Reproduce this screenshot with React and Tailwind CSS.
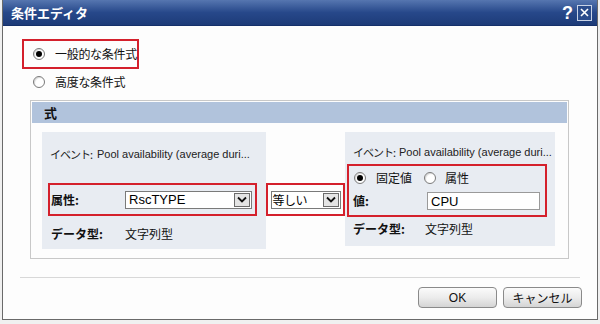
import React from "react";

const jp = { fontFamily: '"Noto Sans CJK JP", "Liberation Sans", sans-serif' };
const lat = { fontFamily: '"Liberation Sans", Arial, "Noto Sans CJK JP", sans-serif' };

function Radio({ checked }) {
  return (
    <div className="w-[12px] h-[12px] rounded-full border border-[#7a7a7a] bg-white flex items-center justify-center shrink-0 shadow-[inset_1px_1px_1px_rgba(0,0,0,0.15)]">
      {checked && <div className="w-[6px] h-[6px] rounded-full bg-black" />}
    </div>
  );
}

function Arrow() {
  return (
    <div className="w-[16px] h-[14px] border border-[#6b6b6b] bg-[#e4e4e4] flex items-center justify-center shrink-0">
      <svg width="10" height="7" viewBox="0 0 10 7">
        <path d="M1 1.5 L5 5.5 L9 1.5" stroke="#111" strokeWidth="1.8" fill="none" />
      </svg>
    </div>
  );
}

export default function App() {
  return (
    <div className="w-[600px] h-[324px] bg-[#f0f0f0] overflow-hidden relative whitespace-nowrap" style={jp}>
      <div className="ml-[2px] w-[596px] h-[320px] bg-[#fdfdfd] border-l border-r border-b border-[#6a6a6a] flex flex-col">
        {/* Title bar */}
        <div className="h-[26px] flex items-center justify-between bg-gradient-to-b from-[#5676b0] via-[#27488a] to-[#1d3b78] border-b border-[#15306a]">
          <span className="ml-[8px] text-white text-[13px] font-bold leading-none">条件エディタ</span>
          <div className="flex items-center gap-[4px] mr-[5px]">
            <span className="text-white text-[18px] font-bold leading-none" style={lat}>?</span>
            <div className="w-[15px] h-[16px] border border-[#c9d3e6] bg-[#2b4c8c] flex items-center justify-center">
              <svg width="9" height="9" viewBox="0 0 9 9">
                <path d="M1 1 L8 8 M8 1 L1 8" stroke="#fff" strokeWidth="1.6" />
              </svg>
            </div>
          </div>
        </div>

        {/* Radio 1 (highlighted) */}
        <div className="mt-[13px] ml-[19px] w-[117px] h-[30px] border-2 border-[#d4202c] flex items-center">
          <div className="ml-[9px]"><Radio checked /></div>
          <span className="ml-[10px] text-[12px] text-[#111] leading-none tracking-[-0.3px]">一般的な条件式</span>
        </div>

        {/* Radio 2 */}
        <div className="mt-[7px] ml-[30px] h-[12px] flex items-center">
          <Radio />
          <span className="ml-[10px] text-[12px] text-[#111] leading-none tracking-[-0.3px]">高度な条件式</span>
        </div>

        {/* Expression panel */}
        <div className="mt-[12px] ml-[27px] w-[539px] h-[159px] border border-[#c8c8c8] p-px flex flex-col">
          <div className="h-[21px] bg-[#b1c3dc] flex items-center">
            <span className="ml-[12px] text-[13px] font-bold text-[#111] leading-none">式</span>
          </div>
          <div className="flex items-start mt-[9px] ml-[10px]">
            {/* Left side */}
            <div className="w-[224px] h-[117px] bg-[#e8ecf2] flex flex-col">
              <div className="mt-[16px] ml-[8px] h-[12px] flex items-center text-[#222]">
                <span className="w-[47px] text-[11px] tracking-[-1px]">イベント:</span>
                <span style={lat} className="text-[11px]">Pool availability (average duri...</span>
              </div>
              <div className="mt-[23px] ml-[6px] w-[209px] h-[33px] border-2 border-[#d4202c] flex items-center">
                <span className="ml-[1px] w-[74px] text-[12px] font-bold text-[#111]">属性:</span>
                <div className="w-[127px] h-[18px] border border-[#7a7a7a] bg-white flex items-center justify-between pl-[3px] pr-[1px]">
                  <span style={lat} className="text-[13px] text-black leading-none">RscTYPE</span>
                  <Arrow />
                </div>
              </div>
              <div className="mt-[9px] ml-[9px] flex items-center text-[12px] text-[#111]">
                <span className="w-[74px] font-bold">データ型:</span>
                <span>文字列型</span>
              </div>
            </div>

            {/* Operator */}
            <div className="mt-[51px] w-[79px] h-[33px] border-2 border-[#d4202c] flex items-center justify-center">
              <div className="w-[70px] h-[18px] border border-[#7a7a7a] bg-white flex items-center justify-between pl-[1px] pr-[1px]">
                <span className="text-[12px] text-black leading-none tracking-[-0.5px]">等しい</span>
                <Arrow />
              </div>
            </div>

            {/* Right side */}
            <div className="w-[210px] h-[114px] bg-[#e8ecf2] flex flex-col">
              <div className="mt-[14px] ml-[8px] h-[12px] flex items-center text-[#222]">
                <span className="w-[46px] text-[11px] tracking-[-1px]">イベント:</span>
                <span style={lat} className="text-[11px]">Pool availability (average duri...</span>
              </div>
              <div className="mt-[6px] ml-[2px] w-[200px] h-[53px] border-2 border-[#d4202c] flex flex-col">
                <div className="mt-[6px] ml-[5px] h-[12px] flex items-center text-[12px] text-[#111]">
                  <Radio checked />
                  <span className="ml-[10px]">固定値</span>
                  <div className="ml-[12px]"><Radio /></div>
                  <span className="ml-[9px]">属性</span>
                </div>
                <div className="mt-[8px] ml-[4px] flex items-center">
                  <span className="w-[74px] text-[12px] font-bold text-[#111]">値:</span>
                  <div className="w-[113px] h-[18px] border border-[#9a9a9a] bg-white flex items-center pl-[3px]">
                    <span style={lat} className="text-[13px] text-black leading-none">CPU</span>
                  </div>
                </div>
              </div>
              <div className="mt-[3px] ml-[8px] flex items-center text-[12px] text-[#111]">
                <span className="w-[72px] font-bold">データ型:</span>
                <span>文字列型</span>
              </div>
            </div>
          </div>
        </div>

        {/* Separator */}
        <div className="mt-[18px] ml-[17px] w-[560px] h-px bg-[#d8d8d8]" />

        {/* Buttons */}
        <div className="mt-[9px] flex justify-end gap-[6px] mr-[15px]">
          <button className="w-[79px] h-[21px] rounded-[4px] border border-[#8a8a8a] bg-gradient-to-b from-[#fbfbfb] via-[#ececec] to-[#d4d4d4] text-[12px] text-[#111]" style={lat}>
            OK
          </button>
          <button className="w-[79px] h-[21px] rounded-[4px] border border-[#8a8a8a] bg-gradient-to-b from-[#fbfbfb] via-[#ececec] to-[#d4d4d4] text-[12px] text-[#111]">
            キャンセル
          </button>
        </div>
      </div>
    </div>
  );
}
